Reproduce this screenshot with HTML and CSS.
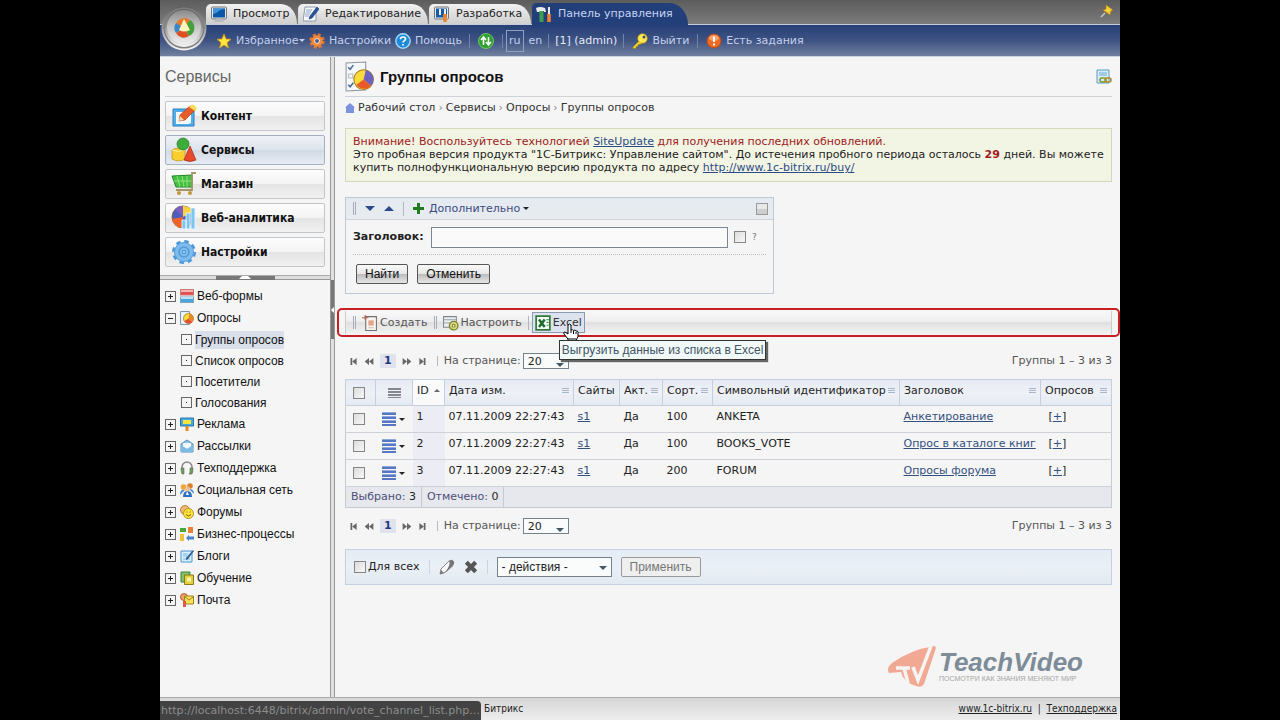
FILE: index.html
```
<!DOCTYPE html>
<html lang="ru">
<head>
    <meta charset="UTF-8">
    <meta name="viewport" content="width=device-width, initial-scale=1.0">
    <title>Группы опросов</title>
    <link rel="stylesheet" href="styles.css">
</head>
<body>
    <!-- Набор иконок -->
    <svg class="sprite" aria-hidden="true">
        <defs>
            <linearGradient id="gRim" x1="0" y1="0" x2="0" y2="1"><stop offset="0" stop-color="#5e5e5e"/><stop offset="0.5" stop-color="#9a9a9a"/><stop offset="1" stop-color="#f6f6f6"/></linearGradient>
            <linearGradient id="gMetal" x1="0" y1="0" x2="0" y2="1"><stop offset="0" stop-color="#8a8a8a"/><stop offset="0.5" stop-color="#c4c4c4"/><stop offset="1" stop-color="#ededed"/></linearGradient>
        </defs>
        <symbol id="i-screen" viewBox="0 0 16 16"><rect x="0.5" y="1" width="15" height="12" rx="1" fill="#e4e6e8" stroke="#777"/><rect x="2" y="2.5" width="12" height="9" fill="#0c56a8"/><path d="M2 8C6 8 8 3 14 3V2.5H2z" fill="#3f92dc"/><path d="M5 13h6l2 3H3z" fill="#b8bcc0"/></symbol>
        <symbol id="i-edit" viewBox="0 0 16 16"><path d="M2 1h11v14H0z" fill="#f6f9fc" stroke="#8c9aab"/><path d="M3 4h6M3 6h5M2 8h5M2 10h4" stroke="#8aa4c4"/><path d="M14 1l2 2-7 9-3 1 1-3z" fill="#28549c" stroke="#163469" stroke-width="0.6"/></symbol>
        <symbol id="i-dev" viewBox="0 0 16 16"><rect x="0.5" y="1" width="14" height="12" rx="1" fill="#e4e6e8" stroke="#777"/><rect x="2" y="2.5" width="11" height="9" fill="#155ba5"/><path d="M6 3v6M11 3v5" stroke="#e9eef3" stroke-width="2"/><path d="M11 8v8" stroke="#f08428" stroke-width="3.500"/></symbol>
        <symbol id="i-tools" viewBox="0 0 16 16"><path d="M0 2q4-2 9 0l1 4H8V5H5v1H1z" fill="#e8eaec"/><path d="M3.500 5h4v11h-4z" fill="#3aa14a"/><path d="M13 1v8" stroke="#e8eaec" stroke-width="2"/><path d="M13 8v8" stroke="#ee8136" stroke-width="3.500"/></symbol>
        <symbol id="i-star" viewBox="0 0 16 16"><path d="M8 1l2 5 5 .3-4 3.400 1.500 5.300L8 12l-4.500 3L5 9.700 1 6.300 6 6z" fill="#ffe43b" stroke="#d39a12" stroke-width="0.8"/></symbol>
        <symbol id="i-cog" viewBox="0 0 16 16"><circle cx="8" cy="8" r="6.200" fill="none" stroke="#e2742c" stroke-width="3" stroke-dasharray="2.900 1.970"/><circle cx="8" cy="8" r="4.200" fill="#fff1dd" stroke="#f08a3e" stroke-width="3"/><circle cx="8" cy="8" r="2" fill="#4a5f8b"/></symbol>
        <symbol id="i-help" viewBox="0 0 16 16"><circle cx="8" cy="8" r="7.200" fill="#1f8ad6" stroke="#a5daf8" stroke-width="1.400"/><path d="M5.500 6.300Q5.600 4 8 4q2.500 0 2.500 2c0 1.600-2.400 1.600-2.400 3.500M8 11v1.600" fill="none" stroke="#fff" stroke-width="1.700"/></symbol>
        <symbol id="i-update" viewBox="0 0 16 16"><circle cx="8" cy="8" r="7.500" fill="#2fa02f" stroke="#6fc763"/><path d="M5.500 12V5M3 7l2.500-3L8 7M10.500 4v7M8 9l2.500 3L13 9" fill="none" stroke="#fff" stroke-width="1.600"/></symbol>
        <symbol id="i-key" viewBox="0 0 16 16"><path d="M8 7L1 14v1.500h3v-2h2v-2h2l3-2z" fill="#f5d62d" stroke="#a07a10" stroke-width="0.600"/><circle cx="10.500" cy="5.500" r="4.800" fill="#ffe84c" stroke="#b08a16" stroke-width="0.600"/><circle cx="12" cy="4" r="1.500" fill="#3c4f7c"/></symbol>
        <symbol id="i-warn" viewBox="0 0 16 16"><circle cx="8" cy="8" r="7" fill="#ee6a22" stroke="#b9481b"/><ellipse cx="8" cy="5" rx="5" ry="3" fill="#f9a26c"/><path d="M8 3.500v5.500M8 10.500v2" stroke="#fff" stroke-width="2"/></symbol>
        <symbol id="i-pin" viewBox="0 0 14 14"><path d="M6 1l7 5-2 1-1 4-7-5 3-1z" fill="#f5cf3a" stroke="#a77c12" stroke-width="0.700"/><path d="M5 9l-4 4" stroke="#ccc" stroke-width="1.300"/></symbol>
        <symbol id="i-logo" viewBox="0 0 48 54"><circle cx="24" cy="28" r="22.500" fill="url(#gRim)"/><circle cx="24" cy="28" r="20.500" fill="#808080"/><circle cx="24" cy="28" r="19" fill="url(#gRim)"/><circle cx="24" cy="27" r="17" fill="url(#gMetal)"/><path d="M24 28L16 24a9 9 0 0 1 14-4z" fill="#e9772a"/><path d="M24 28l6-8a9 9 0 0 1-1 16z" fill="#46a03a"/><path d="M24 28l5 8a9 9 0 0 1-13-3z" fill="#df4f24"/><path d="M24 28l-8 5a9 9 0 0 1 0-10z" fill="#3c86c8"/><path d="M24 19l6 11q-6 3-11 0z" fill="#fff3b8"/></symbol>
        <symbol id="i-content" viewBox="0 0 26 26"><path d="M2 6h21v17H2z" fill="#52aee8" stroke="#2b7fc0"/><path d="M5 9h15v11l-3 1H5z" fill="#f3faff"/><path d="M8 18l1-6L19 3l5 4-10 10z" fill="#e85c28" stroke="#a53b18" stroke-width="0.700"/><path d="M18 4q3-4 6-1t0 5z" fill="#f8dc55"/><path d="M8 18l1-5 4 4z" fill="#f6d9a6"/></symbol>
        <symbol id="i-services" viewBox="0 0 26 26"><path d="M1 13q6-4 13 0v9q-6 4-13 0z" fill="#f8cf2f" stroke="#b98e14" stroke-width="0.700"/><path d="M1 13q6 3 13 0" stroke="#fff0a0" fill="none"/><circle cx="12" cy="7" r="6" fill="#3dac3a" stroke="#227a25" stroke-width="0.700"/><path d="M19 9l6 14q-6 3-12 0z" fill="#e6492c" stroke="#a12b17" stroke-width="0.700"/></symbol>
        <symbol id="i-shop" viewBox="0 0 26 26"><path d="M1 5l20-1v12H5z" fill="#46c043" stroke="#1f8a28"/><path d="M6 5l3 11M11 5l2 11M16 5v11M3 10h17" stroke="#9ee88c" stroke-width="0.800"/><path d="M25 2h-4v17H5" fill="none" stroke="#a49467" stroke-width="1.800"/><circle cx="8" cy="22" r="2" fill="#c29a3a"/><circle cx="19" cy="22" r="2" fill="#c29a3a"/></symbol>
        <symbol id="i-stats" viewBox="0 0 26 26"><circle cx="12" cy="12" r="11" fill="#4a5fc0" stroke="#8b6a3a"/><path d="M12 12L4 4a11 11 0 0 1 9-3z" fill="#7d5fc0"/><path d="M12 12V1a11 11 0 0 1 10 6z" fill="#f9d23c"/><path d="M12 12L1 14a11 11 0 0 0 10 9z" fill="#f0642c"/><path d="M11 15h4v9h-4zM15 8h4v16h-4zM20 3h4v21h-4z" fill="#7cc5ee" stroke="#f2fbff" stroke-width="0.800"/></symbol>
        <symbol id="i-gear" viewBox="0 0 26 26"><circle cx="13" cy="13" r="10" fill="none" stroke="#4d98da" stroke-width="4" stroke-dasharray="4.200 3.650"/><circle cx="13" cy="13" r="9.500" fill="#7cbcee" stroke="#5a9fdc"/><circle cx="13" cy="13" r="5" fill="none" stroke="#559cd8" stroke-width="1.500"/><circle cx="13" cy="13" r="1.500" fill="#d9effd" stroke="#3d86c9"/></symbol>
        <symbol id="i-forms" viewBox="0 0 14 14"><rect x="0.500" y="0.500" width="13" height="5.500" fill="#e2514d" stroke="#c97a78"/><path d="M1 1h12v2H1z" fill="#f6b5b0"/><rect x="0.500" y="8" width="13" height="5.500" fill="#4aa5dc" stroke="#7fa5be"/><path d="M1 8h12v2H1z" fill="#bce1f5"/></symbol>
        <symbol id="i-vote" viewBox="0 0 28 30"><path d="M1 2l19-1v27L1 29z" fill="#f5f8fb" stroke="#8d949c"/><path d="M3 6l2 2 3-4M3 23l2 2 3-4" fill="none" stroke="#4a6a92" stroke-width="1.500"/><path d="M3.500 12.500h4v4h-4z" fill="none" stroke="#b5b9be"/><circle cx="18" cy="18" r="9.500" fill="#f9dc3a" stroke="#b37a1c"/><path d="M18 18l2-9a9 9 0 0 1 5 15z" fill="#6a63c4"/><path d="M18 18l7 6a9 9 0 0 1-14-1z" fill="#ea5a28"/></symbol>
        <symbol id="i-poll" viewBox="0 0 14 14"><path d="M0.500 0.500h9v13h-9z" fill="#e8f2fa" stroke="#7d94aa"/><circle cx="8.500" cy="7.500" r="5" fill="#f9dc3a" stroke="#b37a1c" stroke-width="0.800"/><path d="M8.500 7.500l1-5a5 5 0 0 1 3 8z" fill="#e8862c"/><path d="M8.500 7.500l4 3.500a5 5 0 0 1-8-1z" fill="#e2502c"/></symbol>
        <symbol id="i-ads" viewBox="0 0 14 14"><path d="M0.500 1h13v8h-13z" fill="#4aa8dc" stroke="#2a78b0"/><path d="M3 3h8v4H3z" fill="#f7e63b"/><path d="M5.500 9h3v5h-3z" fill="#e08a28"/></symbol>
        <symbol id="i-mail" viewBox="0 0 14 14"><path d="M1 5l6-4 6 4v8H1z" fill="#8cc8ec" stroke="#5a8fb5"/><path d="M3 4h8v4l-4 2-4-2z" fill="#f5f9fc"/><path d="M1 6l6 4 6-4v7H1z" fill="#7abce6"/></symbol>
        <symbol id="i-support" viewBox="0 0 14 14"><path d="M2 9V6a5 5 0 0 1 10 0v3q0 3-3 4" fill="none" stroke="#888" stroke-width="1.500"/><path d="M1 7h3v6H2q-1-2-1-6zM10 7h3q0 4-1 6h-2z" fill="#67a551" stroke="#666" stroke-width="0.600"/></symbol>
        <symbol id="i-social" viewBox="0 0 14 14"><circle cx="3.500" cy="4" r="2.800" fill="#efa43c"/><circle cx="10" cy="3" r="2.800" fill="#d9822b"/><path d="M0 12q0-6 5-5zM14 11q0-5-5-5z" fill="#4a8fd6"/><circle cx="7.500" cy="6" r="2.500" fill="#f4c38a"/><path d="M3 14q0-6 4.500-6T12 14z" fill="#2f6fc0"/><path d="M7 8l-1 4h3z" fill="#fff"/></symbol>
        <symbol id="i-forum" viewBox="0 0 14 14"><circle cx="5" cy="5" r="4.500" fill="#f2b679" stroke="#b9802e"/><circle cx="8.500" cy="8.500" r="5" fill="#fbe53a" stroke="#b7951c"/><path d="M6 9.500q2.500 3 5 0M7 6.500v1M10 6.500v1" fill="none" stroke="#7a5e10"/></symbol>
        <symbol id="i-biz" viewBox="0 0 14 14"><path d="M0 1h6v4H0z" fill="#4ba640"/><path d="M8 0h5v6H8z" fill="#e8823a"/><path d="M0 7h4v7H0z" fill="#f0c23c"/><path d="M6 11l3-3v1.500h5v3H9V14z" fill="#4a84cc"/></symbol>
        <symbol id="i-blog" viewBox="0 0 14 14"><path d="M1 2h11v11H1z" fill="#d9effc" stroke="#4a96cc"/><path d="M3 5h5M3 7h4M3 10h7" stroke="#7db4d9"/><path d="M13 1l1 1-6 8-2 1 0-2z" fill="#2d5f96"/></symbol>
        <symbol id="i-learn" viewBox="0 0 14 14"><path d="M1 1h9v10H1z" fill="#84c06a" stroke="#3f8136"/><path d="M4.500 4h9v9.500h-9z" fill="#e3ce3c" stroke="#8c7c1a"/><path d="M7 6.500h4v4H7z" fill="#fbf3b4"/></symbol>
        <symbol id="i-post" viewBox="0 0 14 14"><circle cx="4" cy="4" r="3.500" fill="#f1a16a" stroke="#b25f3a"/><path d="M4.500 3h9v8h-9z" fill="#f8e155" stroke="#9b851e"/><path d="M5 4l4 3 4-3" fill="none" stroke="#9b851e"/><path d="M3 8h3v6H3z" fill="#dd5b48"/></symbol>
        <symbol id="i-home" viewBox="0 0 10 10"><path d="M5 0l5 4.500H9V10H1V4.500H0z" fill="#7c92dc"/></symbol>
        <symbol id="i-link" viewBox="0 0 16 16"><path d="M1 1h12v13H1z" fill="#d7ecf8" stroke="#5a9ac4"/><path d="M3 4h8M3 6h8" stroke="#6fa9d0"/><rect x="4" y="9" width="6" height="4" rx="2" fill="none" stroke="#7d9a28" stroke-width="1.600"/><rect x="9" y="9" width="6" height="4" rx="2" fill="none" stroke="#a98b2a" stroke-width="1.600"/></symbol>
        <symbol id="i-create" viewBox="0 0 15 15"><path d="M3.500 1.500h10v13h-10z" fill="#fbf5ef" stroke="#6f6f6f"/><path d="M6 5h5v5H6z" fill="#e0a58c"/><path d="M6 12h5" stroke="#bbb"/><path d="M3 0v5M0 2.500h6" stroke="#b35b48"/></symbol>
        <symbol id="i-config" viewBox="0 0 15 15"><path d="M0.500 1.500h12v10H0.500z" fill="#eceff0" stroke="#808890"/><path d="M1 4.500h11M1 7.500h11" stroke="#98a2a8"/><circle cx="10" cy="10" r="4" fill="#d9dc78" stroke="#7c8430" stroke-width="1.200"/><circle cx="10" cy="10" r="1.300" fill="#fff" stroke="#7c8430"/></symbol>
        <symbol id="i-excel" viewBox="0 0 14 14"><path d="M1 1h12v12H1z" fill="#f5fbf3" stroke="#2f7a3c" stroke-width="1.500"/><path d="M3.500 4l5 6.500M8.500 4l-5 6.500" stroke="#1d6a2f" stroke-width="2.200"/><path d="M10 4h2M10 6.500h2M10 9h2" stroke="#4a9a58"/></symbol>
        <symbol id="i-hand" viewBox="0 0 16 20"><path d="M5 19v-3L1 11q-1-2 1-2l3 2V2q1.500-2 3 0v5q1.500-1 2.500.5 1.500-1 2.500.5 2-.5 2 1.500v4l-2 4V19z" fill="#fff" stroke="#000"/><path d="M8 7v3M10.500 8v3M13 9v2M5 16h8" stroke="#000"/></symbol>
        <symbol id="i-lines" viewBox="0 0 14 14"><path d="M0 0h14v3H0zM0 4h14v3H0zM0 8h14v3H0zM0 12h14v2H0z" fill="#5777c2"/><path d="M0 0h14v1H0zM0 4h14v1H0zM0 8h14v1H0z" fill="#91a9de"/></symbol>
        <symbol id="i-first" viewBox="0 0 8 8"><path d="M0 0h2v8H0zM7 0v8L2 4z" fill="#666"/></symbol>
        <symbol id="i-prev" viewBox="0 0 10 8"><path d="M5 0v8L0 4zM10 0v8L5 4z" fill="#666"/></symbol>
        <symbol id="i-pencil" viewBox="0 0 16 16"><path d="M1 15l1-5 8-8q3-2 5 1l-2 4-8 7z" fill="#fafafa" stroke="#888"/><path d="M1 15l1-4 3 3zM10 2q4-3 5 2l-1 3-8 7q6-9 4-12z" fill="#777"/></symbol>
        <symbol id="i-del" viewBox="0 0 12 12"><path d="M2 2l8 8M10 2l-8 8" stroke="#555" stroke-width="3.600"/></symbol>
        <symbol id="i-tv" viewBox="0 0 48 42"><path d="M4 18Q22 5 46 1q3 0 1 5L36 39q-2 4-8 2-13-4-15-14L1 28q-3-5 3-10z" fill="#f2a994"/><path d="M8 23h14M16 23l4 15M25 22l5 13L43 1" fill="none" stroke="#f5f5f5" stroke-width="3.500"/></symbol>
    </svg>

    <div class="screen">
        <header class="header">
            <nav class="tabs">
                <a href="#" class="tab"><svg class="icon"><use href="#i-screen"/></svg>Просмотр</a>
                <a href="#" class="tab tab-edit"><svg class="icon"><use href="#i-edit"/></svg>Редактирование</a>
                <a href="#" class="tab"><svg class="icon"><use href="#i-dev"/></svg>Разработка</a>
                <a href="#" class="tab active"><svg class="icon"><use href="#i-tools"/></svg>Панель управления</a>
                <svg class="pin"><use href="#i-pin"/></svg>
            </nav>
            <div class="top-bar">
                <a href="#" class="favorites"><svg class="icon"><use href="#i-star"/></svg>Избранное<i class="arrow-down"></i></a>
                <a href="#" class="options"><svg class="icon"><use href="#i-cog"/></svg>Настройки</a>
                <a href="#" class="help"><svg class="icon"><use href="#i-help"/></svg>Помощь</a>
                <i class="line"></i>
                <a href="#" aria-label="Обновления"><svg class="icon"><use href="#i-update"/></svg></a>
                <i class="line"></i>
                <span class="langs"><a href="#" class="lang current">ru</a><a href="#" class="lang">en</a></span>
                <i class="line"></i>
                <a href="#" class="user">[1] (admin)</a>
                <i class="line"></i>
                <a href="#" class="logout"><svg class="icon"><use href="#i-key"/></svg>Выйти</a>
                <i class="line"></i>
                <a href="#" class="tasks"><svg class="icon"><use href="#i-warn"/></svg>Есть задания</a>
            </div>
            <button class="start" aria-label="Меню"><svg><use href="#i-logo"/></svg></button>
        </header>

        <div class="content">
            <aside class="sidebar">
                <h2>Сервисы</h2>
                <div class="sections">
                    <button><svg><use href="#i-content"/></svg>Контент</button>
                    <button class="selected"><svg><use href="#i-services"/></svg>Сервисы</button>
                    <button><svg><use href="#i-shop"/></svg>Магазин</button>
                    <button><svg><use href="#i-stats"/></svg>Веб-аналитика</button>
                    <button><svg><use href="#i-gear"/></svg>Настройки</button>
                </div>
                <div class="splitter"><i></i></div>
                <ul class="tree">
                    <li><b class="node plus"></b><svg><use href="#i-forms"/></svg><a href="#">Веб-формы</a></li>
                    <li><b class="node"></b><svg><use href="#i-poll"/></svg><a href="#">Опросы</a></li>
                    <li class="sub"><b class="node dot"></b><a href="#" class="selected">Группы опросов</a></li>
                    <li class="sub"><b class="node dot"></b><a href="#">Список опросов</a></li>
                    <li class="sub"><b class="node dot"></b><a href="#">Посетители</a></li>
                    <li class="sub"><b class="node dot"></b><a href="#">Голосования</a></li>
                    <li><b class="node plus"></b><svg><use href="#i-ads"/></svg><a href="#">Реклама</a></li>
                    <li><b class="node plus"></b><svg><use href="#i-mail"/></svg><a href="#">Рассылки</a></li>
                    <li><b class="node plus"></b><svg><use href="#i-support"/></svg><a href="#">Техподдержка</a></li>
                    <li><b class="node plus"></b><svg><use href="#i-social"/></svg><a href="#">Социальная сеть</a></li>
                    <li><b class="node plus"></b><svg><use href="#i-forum"/></svg><a href="#">Форумы</a></li>
                    <li><b class="node plus"></b><svg><use href="#i-biz"/></svg><a href="#">Бизнес-процессы</a></li>
                    <li><b class="node plus"></b><svg><use href="#i-blog"/></svg><a href="#">Блоги</a></li>
                    <li><b class="node plus"></b><svg><use href="#i-learn"/></svg><a href="#">Обучение</a></li>
                    <li><b class="node plus"></b><svg><use href="#i-post"/></svg><a href="#">Почта</a></li>
                </ul>
            </aside>
            <div class="divider"><i></i></div>

            <main class="main">
                <div class="title">
                    <svg class="title-icon"><use href="#i-vote"/></svg>
                    <h1>Группы опросов</h1>
                    <a href="#" aria-label="Ссылка"><svg class="icon"><use href="#i-link"/></svg></a>
                </div>
                <nav class="breadcrumbs">
                    <svg><use href="#i-home"/></svg>
                    <a href="#">Рабочий стол</a><i>›</i><a href="#">Сервисы</a><i>›</i><a href="#">Опросы</a><i>›</i><a href="#">Группы опросов</a>
                </nav>

                <div class="notice">
                    <p class="attention">Внимание! Воспользуйтесь технологией <a href="#">SiteUpdate</a> для получения последних обновлений.</p>
                    <p>Это пробная версия продукта "1С-Битрикс: Управление сайтом". До истечения пробного периода осталось <b>29</b> дней. Вы можете купить полнофункциональную версию продукта по адресу <a href="#">http://www.1c-bitrix.ru/buy/</a></p>
                </div>

                <!-- Фильтр -->
                <form class="filter">
                    <div class="filter-head">
                        <i class="grip"></i>
                        <i class="tri down"></i>
                        <i class="tri"></i>
                        <i class="line"></i>
                        <i class="add"></i>
                        <a href="#">Дополнительно<i class="arrow-down"></i></a>
                        <button type="button" class="collapse" aria-label="Свернуть"></button>
                    </div>
                    <div class="filter-row">
                        <label for="name">Заголовок:</label>
                        <input type="text" id="name">
                        <input type="checkbox" aria-label="Точное совпадение">
                        <span>?</span>
                    </div>
                    <div class="filter-buttons">
                        <button type="button" class="btn">Найти</button>
                        <button type="button" class="btn">Отменить</button>
                    </div>
                </form>

                <div class="highlight">
                    <div class="toolbar">
                        <i class="grip"></i>
                        <a href="#"><svg class="icon"><use href="#i-create"/></svg>Создать</a>
                        <i class="grip"></i>
                        <a href="#"><svg class="icon"><use href="#i-config"/></svg>Настроить</a>
                        <i class="line"></i>
                        <a href="#" class="excel"><svg class="icon"><use href="#i-excel"/></svg>Excel
                            <svg class="hand"><use href="#i-hand"/></svg>
                            <span class="tooltip">Выгрузить данные из списка в Excel</span>
                        </a>
                    </div>
                </div>

                <div class="pager pager-top">
                    <svg class="edge"><use href="#i-first"/></svg>
                    <svg><use href="#i-prev"/></svg>
                    <b>1</b>
                    <svg class="flip"><use href="#i-prev"/></svg>
                    <svg class="edge flip"><use href="#i-first"/></svg>
                    <i class="line"></i>
                    <label for="size1">На странице:</label>
                    <span class="select size"><select id="size1"><option>20</option></select></span>
                    <span class="total">Группы 1 – 3 из 3</span>
                </div>

                <table class="list">
                    <colgroup>
                        <col class="c-check"><col class="c-menu"><col class="c-id"><col class="c-date"><col class="c-site"><col class="c-act"><col class="c-sort"><col><col class="c-name"><col class="c-vote">
                    </colgroup>
                    <thead>
                        <tr>
                            <th><input type="checkbox" aria-label="Выбрать все"></th>
                            <th><i class="bars wide"></i></th>
                            <th class="sorted">ID<i class="asc"></i></th>
                            <th>Дата изм.<i class="bars"></i></th>
                            <th>Сайты</th>
                            <th>Акт.<i class="bars"></i></th>
                            <th>Сорт.<i class="bars"></i></th>
                            <th>Символьный идентификатор<i class="bars"></i></th>
                            <th>Заголовок<i class="bars"></i></th>
                            <th>Опросов<i class="bars"></i></th>
                        </tr>
                    </thead>
                    <tbody>
                        <tr>
                            <td><input type="checkbox" aria-label="1"></td>
                            <td class="menu"><svg><use href="#i-lines"/></svg><i class="arrow-down"></i></td>
                            <td class="sorted">1</td><td>07.11.2009 22:27:43</td><td><a href="#">s1</a></td><td>Да</td><td>100</td><td>ANKETA</td>
                            <td><a href="#">Анкетирование</a></td><td>[<a href="#">+</a>]</td>
                        </tr>
                        <tr>
                            <td><input type="checkbox" aria-label="2"></td>
                            <td class="menu"><svg><use href="#i-lines"/></svg><i class="arrow-down"></i></td>
                            <td class="sorted">2</td><td>07.11.2009 22:27:43</td><td><a href="#">s1</a></td><td>Да</td><td>100</td><td>BOOKS_VOTE</td>
                            <td><a href="#">Опрос в каталоге книг</a></td><td>[<a href="#">+</a>]</td>
                        </tr>
                        <tr>
                            <td><input type="checkbox" aria-label="3"></td>
                            <td class="menu"><svg><use href="#i-lines"/></svg><i class="arrow-down"></i></td>
                            <td class="sorted">3</td><td>07.11.2009 22:27:43</td><td><a href="#">s1</a></td><td>Да</td><td>200</td><td>FORUM</td>
                            <td><a href="#">Опросы форума</a></td><td>[<a href="#">+</a>]</td>
                        </tr>
                    </tbody>
                </table>
                <div class="summary">
                    <span>Выбрано: <em>3</em></span>
                    <span>Отмечено: <em>0</em></span>
                </div>

                <div class="pager">
                    <svg class="edge"><use href="#i-first"/></svg>
                    <svg><use href="#i-prev"/></svg>
                    <b>1</b>
                    <svg class="flip"><use href="#i-prev"/></svg>
                    <svg class="edge flip"><use href="#i-first"/></svg>
                    <i class="line"></i>
                    <label for="size2">На странице:</label>
                    <span class="select size"><select id="size2"><option>20</option></select></span>
                    <span class="total">Группы 1 – 3 из 3</span>
                </div>

                <div class="actions">
                    <input type="checkbox" id="all"><label for="all">Для всех</label>
                    <i class="line"></i>
                    <svg class="icon"><use href="#i-pencil"/></svg>
                    <svg class="icon"><use href="#i-del"/></svg>
                    <i class="line"></i>
                    <span class="select action"><select aria-label="Действия"><option>- действия -</option></select></span>
                    <button type="button" class="btn" disabled>Применить</button>
                </div>

                <div class="brand">
                    <svg><use href="#i-tv"/></svg>
                    <div>
                        <strong>TeachVideo</strong>
                        <span>ПОСМОТРИ КАК ЗНАНИЯ МЕНЯЮТ МИР</span>
                    </div>
                </div>
            </main>
        </div>

        <footer class="footer">
            <span>Битрикс</span>
            <div><a href="#">www.1c-bitrix.ru</a> &nbsp;|&nbsp; <a href="#">Техподдержка</a></div>
            <div class="status">http://localhost:6448/bitrix/admin/vote_channel_list.php...</div>
        </footer>
    </div>
</body>
</html>
```
FILE: styles.css
```
* {
    box-sizing: border-box;
}

body {
    margin: 0;
    background-color: #000;
    font-family: "DejaVu Sans", Verdana, sans-serif;
    font-size: 11px;
    line-height: 14px;
    color: #222;
}

a {
    color: inherit;
    text-decoration: none;
}

h1, h2, p, ul {
    margin: 0;
    padding: 0;
}

i, em {
    font-style: normal;
}

button, input, select {
    font-family: inherit;
    font-size: inherit;
    margin: 0;
}

svg {
    display: block;
    flex: none;
}

.sprite {
    position: absolute;
    width: 0;
    height: 0;
}

.icon {
    width: 16px;
    height: 16px;
}

.screen {
    display: flex;
    flex-direction: column;
    width: 75%;
    min-height: 100vh;
    margin: 0 auto;
    background-color: #f5f5f5;
}

/* Шапка */
.header {
    position: relative;
    background-color: #6c6c6c;
    background-image: linear-gradient(#5c5c5c, #7b7b7b 24px);
}

.tabs {
    display: flex;
    align-items: flex-end;
    gap: 1px;
    height: 25px;
    padding: 0 6px 0 46px;
    border-bottom: 1px solid #c5cbd8;
}

.tab {
    display: flex;
    align-items: center;
    gap: 6px;
    width: 91px;
    height: 20px;
    padding-left: 5px;
    border-radius: 5px 16px 0 0 / 5px 20px 0 0;
    background: linear-gradient(#f2f2f2, #cfcfcf);
    color: #222;
    white-space: nowrap;
}

.tab-edit {
    width: 130px;
}

.tab:nth-child(3) {
    width: 102px;
}

.tab.active {
    width: 156px;
    height: 22px;
    margin-bottom: -1px;
    padding-left: 4px;
    border-radius: 5px 20px 0 0 / 5px 24px 0 0;
    background: #233f79;
    color: #c3d4f5;
}

.tab .icon {
    flex: none;
}

.pin {
    width: 14px;
    height: 14px;
    margin: 0 0 6px auto;
}

.top-bar {
    display: flex;
    align-items: center;
    height: 32px;
    padding-left: 56px;
    border-bottom: 1px solid #cdd5e3;
    background: linear-gradient(#263f77, #3e5383 50%, #71809f);
    color: #c3d1ec;
}

.top-bar a {
    display: flex;
    align-items: center;
    gap: 4px;
    white-space: nowrap;
}

.favorites {
    width: 93px;
}

.options {
    width: 86px;
}

.help {
    width: 66px;
}

.top-bar .line {
    margin: 0 8px;
    border-color: #7485aa;
}

.langs {
    display: flex;
    gap: 2px;
    margin: 0 -5px;
}

.top-bar .lang {
    padding: 3px 2px;
    border: 1px solid transparent;
}

.top-bar .lang.current {
    border-color: #8fa0c4;
}

.top-bar .user {
    color: #e4ebf8;
    margin: 0 -2px;
}

.start {
    position: absolute;
    top: 0;
    left: 0;
    padding: 0;
    border: 0;
    background: none;
}

.start svg {
    width: 48px;
    height: 54px;
}

.line {
    height: 14px;
    border-left: 1px solid #b4b8c2;
}

.arrow-down {
    display: inline-block;
    border: 3px solid transparent;
    border-top-color: currentColor;
    border-bottom: 0;
    vertical-align: middle;
}

.favorites .arrow-down {
    margin-left: -3px;
}

.content {
    display: flex;
    flex: 1;
}

/* Левое меню */
.sidebar {
    width: 170px;
    flex: none;
    font-family: "DejaVu Sans Condensed", Tahoma, sans-serif;
    font-size: 12px;
    color: #111;
}

.sidebar h2 {
    height: 40px;
    margin: 0 5px;
    border-bottom: 1px solid #cfd3d8;
    font: 16px/40px "Liberation Sans", Arial, sans-serif;
    color: #666;
}

.sections {
    display: flex;
    flex-direction: column;
    gap: 4px;
    padding: 4px 5px 8px;
}

.sections button {
    display: flex;
    align-items: center;
    gap: 4px;
    height: 30px;
    padding: 0 0 0 5px;
    border: 1px solid #c3c6c9;
    border-radius: 2px;
    background: linear-gradient(#fdfdfd, #f3f3f3 50%, #e4e4e4 51%, #f1f1f1);
    font-weight: bold;
    color: #111;
}

.sections button.selected {
    border-color: #a5b0c0;
    background: linear-gradient(#eef1f6, #dde3ec 50%, #d2dae6 51%, #e6ebf2);
}

.sections svg {
    width: 26px;
    height: 26px;
}

.splitter {
    height: 5px;
    border-top: 1px solid #aaa;
    border-bottom: 1px solid #999;
    background-color: #ddd;
}

.splitter i {
    display: block;
    width: 59px;
    height: 4px;
    margin: 0 auto;
    background-color: #777;
}

.splitter i::before {
    content: "";
    display: block;
    width: 6px;
    margin: 0 auto;
    border: 3px solid transparent;
    border-top: 0;
    border-bottom-color: #fff;
}

.tree {
    padding: 5px;
    list-style: none;
    font-family: "Liberation Sans", Arial, sans-serif;
}

.tree li {
    display: flex;
    align-items: center;
    gap: 4px;
    height: 22px;
}

.tree .sub {
    height: 21px;
    padding-left: 16px;
}

.tree svg {
    width: 14px;
    height: 14px;
}

.tree a {
    line-height: 18px;
    margin-left: -1px;
    white-space: nowrap;
}

.tree a.selected {
    background-color: #d9dfea;
}

.node {
    width: 11px;
    height: 11px;
    border: 1px solid #666;
    background: linear-gradient(#222, #222) center / 5px 1px no-repeat;
}

.node.plus {
    background: linear-gradient(#222, #222) center / 5px 1px no-repeat, linear-gradient(#222, #222) center / 1px 5px no-repeat;
}

.node.dot {
    background: linear-gradient(#222, #222) center / 1px 1px no-repeat;
}

.divider {
    width: 5px;
    padding-top: 223px;
    border-left: 1px solid #999;
    border-right: 1px solid #999;
    background-color: #e0e0e0;
}

.divider i {
    display: flex;
    align-items: center;
    height: 59px;
    background-color: #777;
}

.divider i::before {
    content: "";
    border: 3px solid transparent;
    border-left: 0;
    border-right-color: #fff;
}

/* Рабочая область */
.main {
    display: flex;
    flex-direction: column;
    flex: 1;
    min-width: 0;
    padding: 0 8px 8px 10px;
}

.title {
    display: flex;
    align-items: center;
    gap: 6px;
    height: 40px;
    border-bottom: 1px solid #cfd3d8;
}

.title-icon {
    width: 29px;
    height: 31px;
}

.title h1 {
    flex: 1;
    font: bold 15px/20px "Liberation Sans", Arial, sans-serif;
    color: #111;
}

.breadcrumbs {
    display: flex;
    align-items: center;
    gap: 3px;
    height: 22px;
    color: #333;
}

.breadcrumbs svg {
    width: 10px;
    height: 10px;
}

.breadcrumbs i {
    color: #888;
}

.notice {
    margin-top: 9px;
    padding: 6px 2px 7px 7px;
    border: 1px solid #d3d8bd;
    background-color: #f3f5e4;
    line-height: 13px;
}

.notice a {
    color: #2b4c86;
    text-decoration: underline;
}

.attention, .notice b {
    color: #a02020;
}

.filter {
    width: 429px;
    height: 97px;
    margin-top: 15px;
    border: 1px solid #bccad8;
}

.filter-head {
    display: flex;
    align-items: center;
    gap: 9px;
    height: 22px;
    padding: 0 5px 0 7px;
    border-bottom: 1px solid #ccd5e0;
    background: linear-gradient(#e4eaf1, #e8ecf0);
    color: #3d4a80;
}

.grip {
    width: 3px;
    height: 13px;
    border: 1px solid #a5adb8;
    border-width: 0 1px;
}

.tri {
    border: 5px solid transparent;
    border-top: 0;
    border-bottom-color: #2b4a8b;
}

.tri.down {
    border-top: 5px solid #2b4a8b;
    border-bottom: 0;
}

.add {
    width: 11px;
    height: 11px;
    margin-right: -4px;
    background: linear-gradient(#1f7d1f, #1f7d1f) center / 11px 3px no-repeat, linear-gradient(#1f7d1f, #1f7d1f) center / 3px 11px no-repeat;
}

.filter-head .arrow-down {
    margin-left: 3px;
    color: #222;
}

.collapse {
    width: 12px;
    height: 12px;
    margin-left: auto;
    padding: 0;
    border: 1px solid #999;
    background: linear-gradient(#e8e8e8 50%, #cfcfcf 51%);
}

.filter-row {
    display: flex;
    align-items: center;
    gap: 6px;
    height: 35px;
    margin: 0 7px;
    border-bottom: 1px dotted #bbb;
}

.filter-row label {
    width: 72px;
    font-weight: bold;
    white-space: nowrap;
}

.filter-row input[type="text"] {
    width: 297px;
    height: 21px;
    border: 1px solid #7c868f;
    background-color: #fafafa;
}

.filter-row span {
    color: #777;
    font-size: 9px;
}

input[type="checkbox"] {
    appearance: none;
    display: block;
    width: 12px;
    height: 12px;
    flex: none;
    border: 1px solid #858585;
    background: linear-gradient(135deg, #dcdcdc, #f8f8f8);
}

.filter-buttons {
    display: flex;
    gap: 9px;
    padding: 9px 10px;
}

.btn {
    height: 20px;
    padding: 0 8px;
    border: 1px solid #555;
    border-radius: 2px;
    background: linear-gradient(#fafafa, #e6e6e6 50%, #bcbcbc 51%, #e6e6e6);
    font: 12px/16px "Liberation Sans", Arial, sans-serif;
    color: #111;
}

.btn:disabled {
    border-color: #999;
    background: #efefef;
    color: #777;
}

.highlight {
    margin: 14px -8px 0;
    padding: 1px 6px;
    border: 2px solid #c51f1f;
    border-radius: 5px;
}

.toolbar {
    display: flex;
    align-items: center;
    gap: 6px;
    height: 23px;
    padding-left: 7px;
    border-left: 1px solid #ccc;
    border-right: 1px solid #ccc;
    background: linear-gradient(#f8f8f8, #efefef 45%, #e0e0e0 50%, #f2f2f2);
    color: #555;
}

.toolbar a {
    display: flex;
    align-items: center;
    gap: 2px;
}

.toolbar a.excel {
    position: relative;
    height: 21px;
    margin-left: -3px;
    padding: 0 2px;
    border: 1px solid #8a9ab0;
    background-color: #dce3ee;
    color: #333;
}

.hand {
    position: absolute;
    top: 10px;
    left: 30px;
    width: 16px;
    height: 20px;
}

.tooltip {
    position: absolute;
    top: 27px;
    left: 26px;
    z-index: 1;
    padding: 1px 2px;
    border: 1px solid #333;
    background-color: #f1faf8;
    box-shadow: 2px 2px 1px #666;
    font: 12px/16px "Liberation Sans", Arial, sans-serif;
    color: #456;
    white-space: nowrap;
}

.pager {
    display: flex;
    align-items: center;
    gap: 6px;
    height: 36px;
    padding-left: 5px;
    color: #555;
}

.pager-top {
    margin-top: 6px;
}

.pager svg {
    width: 10px;
    height: 7px;
}

.pager svg.edge {
    width: 8px;
}

.flip {
    transform: scaleX(-1);
}

.pager b {
    padding: 0 4px;
    background-color: #e0e2ee;
    color: #223a80;
}

.pager .line {
    height: 10px;
    margin: 0 0 0 5px;
}

.total {
    margin-left: auto;
}

.select {
    position: relative;
    display: block;
}

.select::after {
    content: "";
    position: absolute;
    right: 5px;
    bottom: 5px;
    border: 4px solid transparent;
    border-top-color: #456;
    border-bottom: 0;
}

.select select {
    appearance: none;
    display: block;
    width: 100%;
    height: 20px;
    padding: 0 4px;
    border: 1px solid #75828c;
    border-radius: 0;
    background-color: #fafcfc;
    color: #222;
}

.select.size {
    width: 46px;
    margin-left: -4px;
}

.select.size::after {
    bottom: 2px;
}

.select.size select {
    height: 16px;
}

.list {
    width: 100%;
    table-layout: fixed;
    border-collapse: collapse;
    border: 1px solid #c5cbd6;
}

.c-check { width: 30px; }
.c-menu { width: 37px; }
.c-id { width: 32px; }
.c-date { width: 129px; }
.c-site { width: 46px; }
.c-act { width: 43px; }
.c-sort { width: 50px; }
.c-name { width: 141px; }
.c-vote { width: 71px; }

.list th {
    height: 26px;
    padding: 0 4px 4px;
    border: 1px solid #c5cfdd;
    background: linear-gradient(#e6ebf4, #eef1f6 50%, #e4e9f2);
    font-weight: normal;
    text-align: left;
    white-space: nowrap;
}

.list td {
    height: 27px;
    padding: 0 4px 4px;
    border-bottom: 1px solid #cdd1d8;
    white-space: nowrap;
}

.list td:last-child {
    padding-left: 8px;
}

.list th.sorted {
    background: #fafafa;
}

.list td.sorted {
    background-color: #ececf4;
}

.list a {
    color: #34507f;
    text-decoration: underline;
}

.list input[type="checkbox"] {
    margin: 4px 0 0 3px;
}

.bars {
    float: right;
    width: 7px;
    height: 6px;
    margin-top: 4px;
    background: repeating-linear-gradient(#a9b6c9 0 1px, transparent 1px 2px);
}

.bars.wide {
    width: 13px;
    height: 10px;
    margin-right: 7px;
    background: repeating-linear-gradient(#85898f 0 2px, transparent 2px 3px);
}

.asc {
    float: right;
    margin-top: 5px;
    border: 3px solid transparent;
    border-top: 0;
    border-bottom-color: #667;
}

.menu svg {
    display: inline-block;
    width: 14px;
    height: 14px;
    margin: 0 3px 0 2px;
    vertical-align: middle;
}

.list td.menu {
    padding-bottom: 0;
}

.summary {
    display: flex;
    height: 21px;
    border: 1px solid #c5cbd6;
    border-top: 0;
    background-color: #e7e8ed;
    line-height: 20px;
    color: #4d4d78;
}

.summary span {
    padding: 0 5px;
    border-right: 1px solid #c5cbd6;
}

.summary em {
    color: #222;
}

.actions {
    display: flex;
    align-items: center;
    gap: 9px;
    height: 36px;
    margin-top: 5px;
    padding-left: 8px;
    border: 1px solid #c3d2e0;
    background: linear-gradient(#e4ecf5, #eaf0f6 50%, #e2e9f0);
}

.actions label {
    margin-left: -7px;
}

.actions .line {
    border-color: #cdd4dd;
}

.actions .icon:nth-of-type(2) {
    width: 14px;
    height: 14px;
}

.select.action {
    width: 115px;
}

.select.action::after {
    bottom: 7px;
}

.select.action select {
    font-family: "Liberation Sans", Arial, sans-serif;
    font-size: 12px;
}

/* Логотип */
.brand {
    display: flex;
    align-items: center;
    gap: 3px;
    margin: auto 29px 2px auto;
    color: #7d8c98;
}

.brand svg {
    width: 48px;
    height: 42px;
}

.brand strong, .brand span {
    display: block;
    font-family: "Liberation Sans", Arial, sans-serif;
}

.brand strong {
    font-size: 26px;
    line-height: 26px;
    font-style: italic;
}

.brand span {
    font-size: 7px;
    line-height: 8px;
    color: #a5a5a5;
}

.footer {
    position: relative;
    display: flex;
    justify-content: space-between;
    height: 23px;
    padding: 0 3px 0 324px;
    border-top: 1px solid #aaa;
    background: linear-gradient(#d6d6d6, #ededed);
    font: 10px/22px "DejaVu Sans Condensed", Tahoma, sans-serif;
}

.footer a {
    text-decoration: underline;
}

.status {
    position: absolute;
    left: 0;
    bottom: 0;
    padding: 1px;
    border-radius: 0 4px 0 0;
    background-color: #424242;
    font: 11px/17px "DejaVu Sans", Verdana, sans-serif;
    color: #8c8c8c;
    white-space: nowrap;
}
```
